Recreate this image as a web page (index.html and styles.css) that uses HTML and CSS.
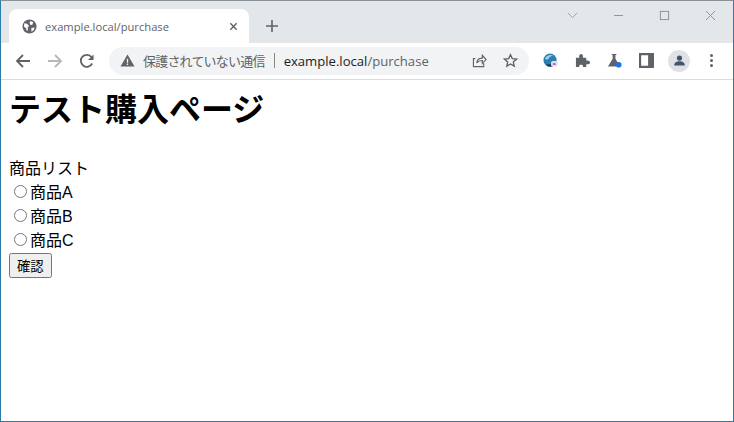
FILE: index.html
```html
<!DOCTYPE html>
<html lang="ja"><head>
  <meta charset="UTF-8">
  <meta name="viewport" content="width=device-width, initial-scale=1.0">
  <link rel="stylesheet" href="styles.css"><title>テスト購入ページ</title></head><body>
  <div class="window">
    <div class="tabstrip">
      <div class="tab">
        <svg class="favicon" viewBox="0 0 16 16"><circle cx="8" cy="8" r="7.500" fill="#5f6368"/><path d="M2.500 4.500l3 .5 2 2.500-1.500 1.500.5 3-1.500.5-.5-2.500-2.500-2zM9 2.200l3 1.300-1 2.500-2 .5-1-2.500zM10 9.500l3.500-.5-1 3-2.500 1.500z" fill="#fff"/></svg>
        <span class="tab-title">example.local/purchase</span>
        <svg class="tab-close" viewBox="0 0 10 10"><path d="M1.500 1.500l7 7M8.500 1.500l-7 7" stroke="#5f6368" stroke-width="1.600"/></svg>
      </div>
      <svg class="new-tab" viewBox="0 0 12 12"><path d="M6 0v12M0 6h12" stroke="#5f6368" stroke-width="1.600"/></svg>
      <div class="window-controls">
        <svg class="ctl ctl-chevron" viewBox="0 0 12 12"><path d="M1 3l5 5.500L11 3" fill="none" stroke="#9a9da0"/></svg>
        <svg class="ctl ctl-min" viewBox="0 0 12 12"><path d="M1 6h10" stroke="#8a8d90"/></svg>
        <svg class="ctl ctl-max" viewBox="0 0 12 12"><rect x="1.500" y="1.500" width="9" height="9" fill="none" stroke="#8a8d90"/></svg>
        <svg class="ctl ctl-close" viewBox="0 0 12 12"><path d="M1 1l10 10M11 1L1 11" stroke="#8a8d90"/></svg>
      </div>
    </div>
    <div class="toolbar">
      <svg class="nav" viewBox="0 0 16 16"><path d="M15 8H2M8 2L2 8l6 6" fill="none" stroke="#5f6368" stroke-width="1.800"/></svg>
      <svg class="nav" viewBox="0 0 16 16"><path d="M1 8h13M8 2l6 6-6 6" fill="none" stroke="#b4b6b8" stroke-width="1.800"/></svg>
      <svg class="nav" viewBox="0 0 16 16"><path d="M13.200 10.500A6 6 0 1 1 12.500 4L14 5.500" fill="none" stroke="#5f6368" stroke-width="1.800"/><path d="M14.500 1.500v5.500H9z" fill="#5f6368"/></svg>
      <div class="omnibox">
        <svg class="warn" viewBox="0 0 16 16"><path d="M8 1.500L15.500 14.500H.5z" fill="#5f6368"/><path d="M7.300 6h1.400v4.500H7.300zM7.300 11.300h1.400v1.400H7.300z" fill="#f1f3f4"/></svg>
        <span class="not-secure">保護されていない通信</span>
        <span class="divider"></span>
        <span class="url">example.local<span class="url-path">/purchase</span></span>
        <svg class="omni-icon share" viewBox="0 0 16 16"><path d="M3.500 6H1.500v8.500h11V11M5 10.500c.5-3.500 3-5 6-5V2.500l4 4.500-4 4V8c-3 0-4.500.5-6 2.500z" fill="none" stroke="#5f6368" stroke-width="1.200"/></svg>
        <svg class="omni-icon" viewBox="0 0 16 16"><path d="M8 1.800l1.900 4.200 4.500.5-3.400 3 1 4.500L8 11.700 4 14l1-4.500-3.400-3 4.500-.5z" fill="none" stroke="#5f6368" stroke-width="1.400"/></svg>
      </div>
      <div class="extensions">
        <svg class="ext" viewBox="0 0 16 16"><circle cx="7.500" cy="7.500" r="7" fill="#2a7fb0"/><path d="M2 6c2-4 6-5 9-3-2 0-4 1-5 3-1 1.500-3 1-4 0z" fill="#9ed0ea"/><path d="M3 12c3 1 6 0 7-3l4 1c-1 3-4 5-7 4.500-2 0-3-1-4-2.500z" fill="#12344f"/><rect x="8.500" y="8.500" width="7" height="6" rx="2" fill="#e4dce6"/><rect x="10.500" y="11" width="3" height="1.500" fill="#b03ca0"/></svg>
        <svg class="ext" viewBox="0 0 16 16"><path d="M1 5h3.500C4 2 5.500 1 6.500 1S9 2 8.500 5H12v3c3-.5 4 1 4 2s-1 2.500-4 2v3H8.500c.5-2-1-2.500-2-2.500s-2.500.5-2 2.500H1z" fill="#5f6368"/></svg>
        <svg class="ext" viewBox="0 0 16 16"><path d="M5 1h5v1H9v4l5 8.500H1L6 6V2H5z" fill="#5f6368"/><circle cx="12.500" cy="12.500" r="3" fill="#1a73e8"/></svg>
        <svg class="ext" viewBox="0 0 14 14"><path fill-rule="evenodd" d="M0 0h14v14H0zM2 2v10h6.500V2z" fill="#5f6368"/></svg>
        <span class="avatar"><svg viewBox="0 0 16 16"><circle cx="8" cy="5" r="3.200" fill="#46546b"/><path d="M1.500 14c0-3.500 3-5 6.500-5s6.500 1.500 6.500 5z" fill="#46546b"/></svg></span>
        <span class="menu"><i></i><i></i><i></i></span>
      </div>
    </div>
    <div class="content">
      <h1>テスト購入ページ</h1>
      <form>
        <div>商品リスト</div>
        <div><label><input type="radio" name="item">商品A</label></div>
        <div><label><input type="radio" name="item">商品B</label></div>
        <div><label><input type="radio" name="item">商品C</label></div>
        <button type="button">確認</button>
      </form>
    </div>
  </div>
</body></html>
```

FILE: styles.css
```css
html, body {
  margin: 0;
  padding: 0;
  height: 100%;
}

body {
  font-family: "Liberation Sans", "Noto Sans CJK JP", sans-serif;
  overflow: hidden;
}

.window {
  box-sizing: border-box;
  width: 734px;
  height: 422px;
  display: flex;
  flex-direction: column;
  border: 1px solid #2b7cab;
  border-top-color: #8a9299;
  background-color: #fff;
}

.tabstrip {
  height: 42px;
  flex: none;
  display: flex;
  align-items: flex-end;
  background-color: #e4e7ea;
}

.tab {
  box-sizing: border-box;
  width: 240px;
  height: 34px;
  margin-left: 8px;
  padding: 0 11px 0 13px;
  display: flex;
  align-items: center;
  background-color: #fff;
  border-radius: 8px 8px 0 0;
}

.favicon {
  width: 15px;
  height: 15px;
  flex: none;
}

.tab-title {
  margin-left: 8px;
  font-family: "Open Sans", sans-serif;
  font-size: 11.200px;
  color: #5f6368;
  flex: 1;
}

.tab-close {
  width: 9px;
  height: 9px;
}

.new-tab {
  width: 12px;
  height: 12px;
  margin: 0 0 11px 17px;
}

.window-controls {
  margin-left: auto;
  align-self: flex-start;
  display: flex;
  align-items: center;
  padding: 9px 17px 0 0;
}

.ctl {
  width: 11px;
  height: 11px;
  margin-left: 35px;
}

.toolbar {
  box-sizing: border-box;
  height: 37px;
  flex: none;
  display: flex;
  align-items: center;
  padding: 0 0 1px 14px;
  background-color: #fff;
  border-bottom: 1px solid #d9dbdd;
}

.nav {
  width: 16px;
  height: 16px;
  margin-right: 16px;
  flex: none;
}

.omnibox {
  box-sizing: border-box;
  width: 420px;
  height: 28px;
  margin-left: -2px;
  padding: 0 11px;
  display: flex;
  align-items: center;
  flex: none;
  background-color: #f1f3f4;
  border-radius: 14px;
}

.warn {
  width: 15px;
  height: 15px;
  flex: none;
}

.not-secure {
  margin-left: 8px;
  font-size: 13px;
  letter-spacing: -0.800px;
  color: #5f6368;
  white-space: nowrap;
}

.divider {
  width: 1px;
  height: 15px;
  margin: 0 9px;
  background-color: #888;
}

.url {
  font-family: "Open Sans", sans-serif;
  font-size: 13.100px;
  color: #202124;
  flex: 1;
}

.url-path {
  color: #5f6368;
}

.omni-icon {
  width: 15px;
  height: 15px;
  margin-left: 16px;
  flex: none;
}

.extensions {
  display: flex;
  align-items: center;
  margin-left: 14px;
}

.ext {
  width: 15px;
  height: 15px;
  margin-right: 17px;
  flex: none;
}

.avatar {
  width: 22px;
  height: 22px;
  margin-left: -3px;
  display: flex;
  align-items: center;
  justify-content: center;
  background-color: #dfe1e5;
  border-radius: 50%;
}

.avatar svg {
  width: 13px;
  height: 13px;
}

.menu {
  margin-left: 20px;
  display: flex;
  flex-direction: column;
  gap: 2px;
}

.menu i {
  display: block;
  width: 3px;
  height: 3px;
  background-color: #5f6368;
  border-radius: 50%;
}

.content {
  padding: 0 8px;
  color: #000;
  font-size: 16px;
}

h1 {
  margin: 4px 0 25px;
  font-size: 32px;
  font-weight: bold;
}

input[type="radio"] {
  margin: 3px 3px 0 5px;
}

button {
  margin-top: 2px;
  font-family: inherit;
  font-size: 13.333px;
}
```
